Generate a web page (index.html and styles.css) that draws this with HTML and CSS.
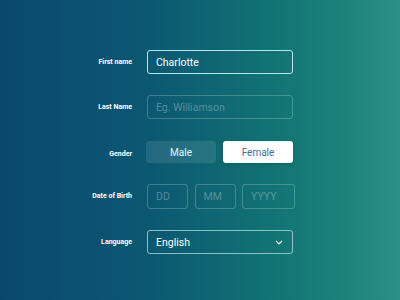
FILE: index.html
```html
<!DOCTYPE html>
<html>
  <head>
    <title>Profile form</title>
    <link rel="stylesheet" href="styles.css">
  </head>
  <body>
    <div class="form">
      <label class="label">First name</label>
      <div class="field field-focus">Charlotte</div>

      <label class="label">Last Name</label>
      <div class="field placeholder">Eg. Williamson</div>

      <label class="label label-gender">Gender</label>
      <div class="toggle">
        <span class="toggle-btn">Male</span>
        <span class="toggle-btn active">Female</span>
      </div>

      <label class="label label-dob">Date of Birth</label>
      <div class="date-row">
        <div class="field placeholder date-dd">DD</div>
        <div class="field placeholder date-mm">MM</div>
        <div class="field placeholder date-yy">YYYY</div>
      </div>

      <label class="label">Language</label>
      <div class="field field-select">
        <span>English</span>
        <svg class="chevron" width="8" height="5" viewBox="0 0 8 5">
          <path d="M1 1 L4 4 L7 1" fill="none" stroke="#e8f4f6" stroke-width="1.2"/>
        </svg>
      </div>
    </div>
  </body>
</html>
```

FILE: styles.css
```css
html, body {
  margin: 0;
  padding: 0;
}

body {
  width: 400px;
  height: 300px;
  overflow: hidden;
  background: linear-gradient(to right, #0a4870 0%, #0c5872 38%, #117073 65%, #1a8179 84%, #2c8f88 100%);
  font-family: Roboto, "Liberation Sans", sans-serif;
  color: #fff;
}

.form {
  display: grid;
  grid-template-columns: 132px 146px;
  grid-template-rows: 24px 24px 23px 25px 24px;
  column-gap: 15px;
  row-gap: 21px;
  padding-top: 50px;
}

.label {
  align-self: center;
  text-align: right;
  font-size: 7px;
  font-weight: bold;
  color: #fff;
}

.label-gender {
  margin-top: 4px;
}

.label-dob {
  margin-bottom: 2px;
}

.field {
  box-sizing: border-box;
  height: 24px;
  border: 1px solid rgba(255, 255, 255, 0.22);
  border-radius: 3px;
  padding: 0 8px;
  display: flex;
  align-items: center;
  font-size: 10.5px;
  color: #fff;
}

.field-focus {
  border-color: #b6e6ef;
}

.placeholder {
  color: rgba(255, 255, 255, 0.3);
  font-size: 10.5px;
}

.toggle {
  display: flex;
  gap: 7px;
  margin-top: 1px;
  margin-left: -1px;
}

.toggle-btn {
  flex: 1;
  display: flex;
  align-items: center;
  justify-content: center;
  border-radius: 3px;
  background: rgba(255, 255, 255, 0.1);
  font-size: 10px;
  color: #eef6f8;
}

.toggle-btn.active {
  background: #fff;
  color: #3f6e9b;
  box-shadow: 0 1px 3px rgba(0, 0, 0, 0.15);
}

.date-row {
  display: flex;
  gap: 6.5px;
}

.date-row .field {
  height: 25px;
  flex-shrink: 0;
}

.date-dd,
.date-mm {
  width: 41px;
}

.date-yy {
  width: 53px;
}

.field-select {
  justify-content: space-between;
  border-color: rgba(190, 232, 240, 0.7);
  padding-right: 9px;
}
```
